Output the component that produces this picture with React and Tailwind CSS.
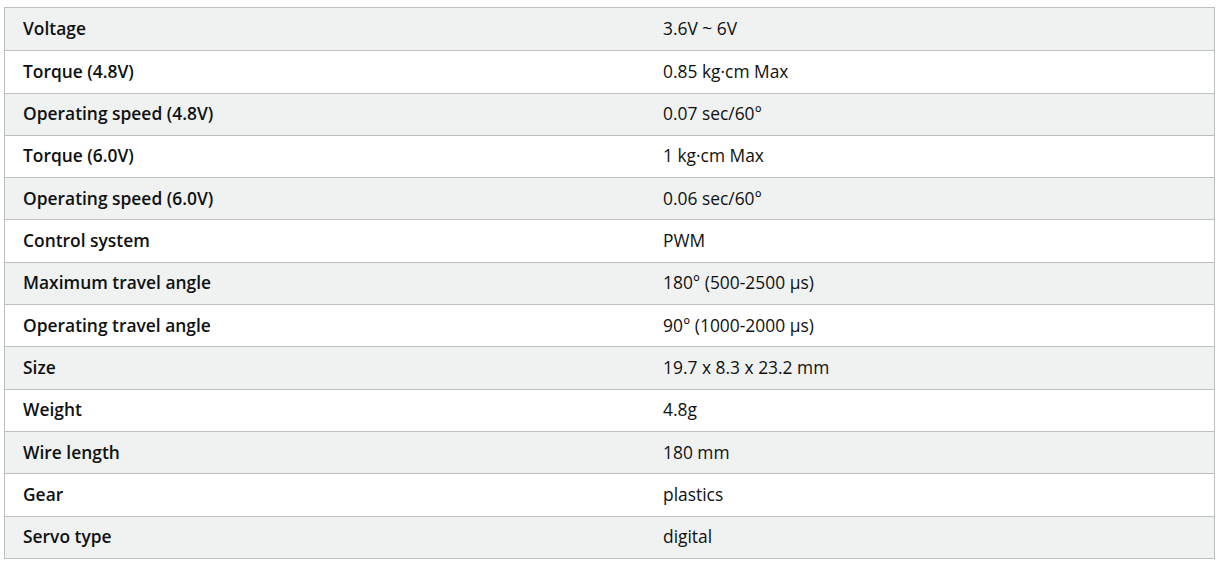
import React from "react";

const specs = [
  ["Voltage", "3.6V ~ 6V"],
  ["Torque (4.8V)", "0.85 kg·cm Max"],
  ["Operating speed (4.8V)", "0.07 sec/60°"],
  ["Torque (6.0V)", "1 kg·cm Max"],
  ["Operating speed (6.0V)", "0.06 sec/60°"],
  ["Control system", "PWM"],
  ["Maximum travel angle", "180° (500-2500 µs)"],
  ["Operating travel angle", "90° (1000-2000 µs)"],
  ["Size", "19.7 x 8.3 x 23.2 mm"],
  ["Weight", "4.8g"],
  ["Wire length", "180 mm"],
  ["Gear", "plastics"],
  ["Servo type", "digital"],
];

export default function App() {
  return (
    <div
      className="w-[1220px] h-[565px] bg-white pt-[7px] pl-[4px]"
      style={{ fontFamily: '"Open Sans", "Noto Sans", sans-serif' }}
    >
      <div className="w-[1211px] border border-[#bbbfbf] text-[17.4px] text-[#0f1111]">
        {specs.map(([label, value], i) => (
          <div
            key={label}
            className={`flex items-center h-[42.3px] pb-[2px] ${
              i > 0 ? "border-t border-[#bbbfbf]" : ""
            } ${i % 2 === 0 ? "bg-[#f0f2f2]" : "bg-white"}`}
          >
            <div className="w-[640px] pl-[18px] font-semibold">{label}</div>
            <div className="pl-[18px]">{value}</div>
          </div>
        ))}
      </div>
    </div>
  );
}
